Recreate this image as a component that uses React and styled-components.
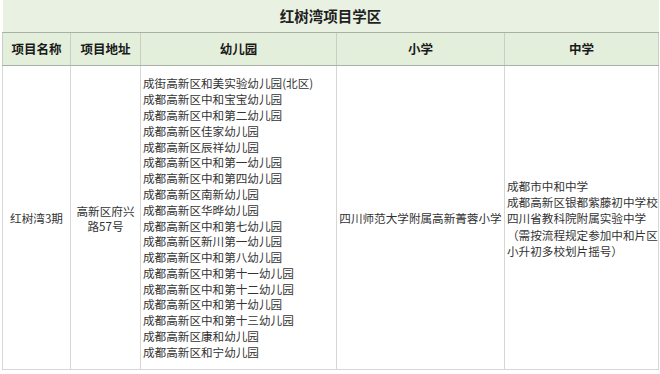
import styled, { createGlobalStyle } from "styled-components";

const Global = createGlobalStyle`
  html, body {
    margin: 0;
    padding: 0;
    background: #ffffff;
  }
  body {
    font-family: "Noto Sans CJK SC", "Noto Sans", sans-serif;
  }
`;

const Table = styled.table`
  margin: 0 0 0 2px;
  width: 656px;
  table-layout: fixed;
  border-collapse: collapse;
  color: #333333;
`;

const TitleCell = styled.th`
  height: 32px;
  padding: 0;
  background: #e9f2e2;
  border-bottom: 1px solid #a9b0a6;
  font-size: 14.5px;
  font-weight: 700;
  color: #1f1f1f;
  text-align: center;
  vertical-align: middle;
  line-height: 1;
`;

const HeadCell = styled.th`
  height: 32px;
  padding: 0;
  background: #e3efda;
  border-left: 1px solid #c9cfc6;
  border-right: 1px solid #c9cfc6;
  border-bottom: 1px solid #a9b0a6;
  font-size: 12.5px;
  font-weight: 700;
  color: #1a1a1a;
  text-align: center;
  vertical-align: middle;
  line-height: 1;
`;

const Cell = styled.td`
  height: 301px;
  padding: ${(p) => (p.$align === "left" ? "2px 0 0 2px" : "2px 0 0")};
  border: 1px solid #d6d6d6;
  font-size: 11.6px;
  line-height: ${(p) => p.$lh || 15}px;
  text-align: ${(p) => p.$align || "center"};
  vertical-align: middle;
  white-space: nowrap;
  overflow: hidden;
`;

const Line = styled.div`
  white-space: nowrap;
`;

const kindergartens = [
  "成街高新区和美实验幼儿园(北区)",
  "成都高新区中和宝宝幼儿园",
  "成都高新区中和第二幼儿园",
  "成都高新区佳家幼儿园",
  "成都高新区辰祥幼儿园",
  "成都高新区中和第一幼儿园",
  "成都高新区中和第四幼儿园",
  "成都高新区南新幼儿园",
  "成都高新区华晔幼儿园",
  "成都高新区中和第七幼儿园",
  "成都高新区新川第一幼儿园",
  "成都高新区中和第八幼儿园",
  "成都高新区中和第十一幼儿园",
  "成都高新区中和第十二幼儿园",
  "成都高新区中和第十幼儿园",
  "成都高新区中和第十三幼儿园",
  "成都高新区康和幼儿园",
  "成都高新区和宁幼儿园",
];

const middle = [
  "成都市中和中学",
  "成都高新区银都紫藤初中学校",
  "四川省教科院附属实验中学",
  "（需按流程规定参加中和片区",
  "小升初多校划片摇号）",
];

export default function App() {
  return (
    <>
      <Global />
      <Table>
        <colgroup>
          <col style={{ width: 68 }} />
          <col style={{ width: 70 }} />
          <col style={{ width: 196 }} />
          <col style={{ width: 168 }} />
          <col style={{ width: 154 }} />
        </colgroup>
        <thead>
          <tr>
            <TitleCell colSpan={5}>红树湾项目学区</TitleCell>
          </tr>
          <tr>
            <HeadCell>项目名称</HeadCell>
            <HeadCell>项目地址</HeadCell>
            <HeadCell>幼儿园</HeadCell>
            <HeadCell>小学</HeadCell>
            <HeadCell>中学</HeadCell>
          </tr>
        </thead>
        <tbody>
          <tr>
            <Cell>红树湾3期</Cell>
            <Cell $lh={15}>
              <Line>高新区府兴</Line>
              <Line>路57号</Line>
            </Cell>
            <Cell $align="left" $lh={15.8}>
              {kindergartens.map((k) => (
                <Line key={k}>{k}</Line>
              ))}
            </Cell>
            <Cell>四川师范大学附属高新菁蓉小学</Cell>
            <Cell $align="left" $lh={16.2}>
              {middle.map((m) => (
                <Line key={m}>{m}</Line>
              ))}
            </Cell>
          </tr>
        </tbody>
      </Table>
    </>
  );
}
